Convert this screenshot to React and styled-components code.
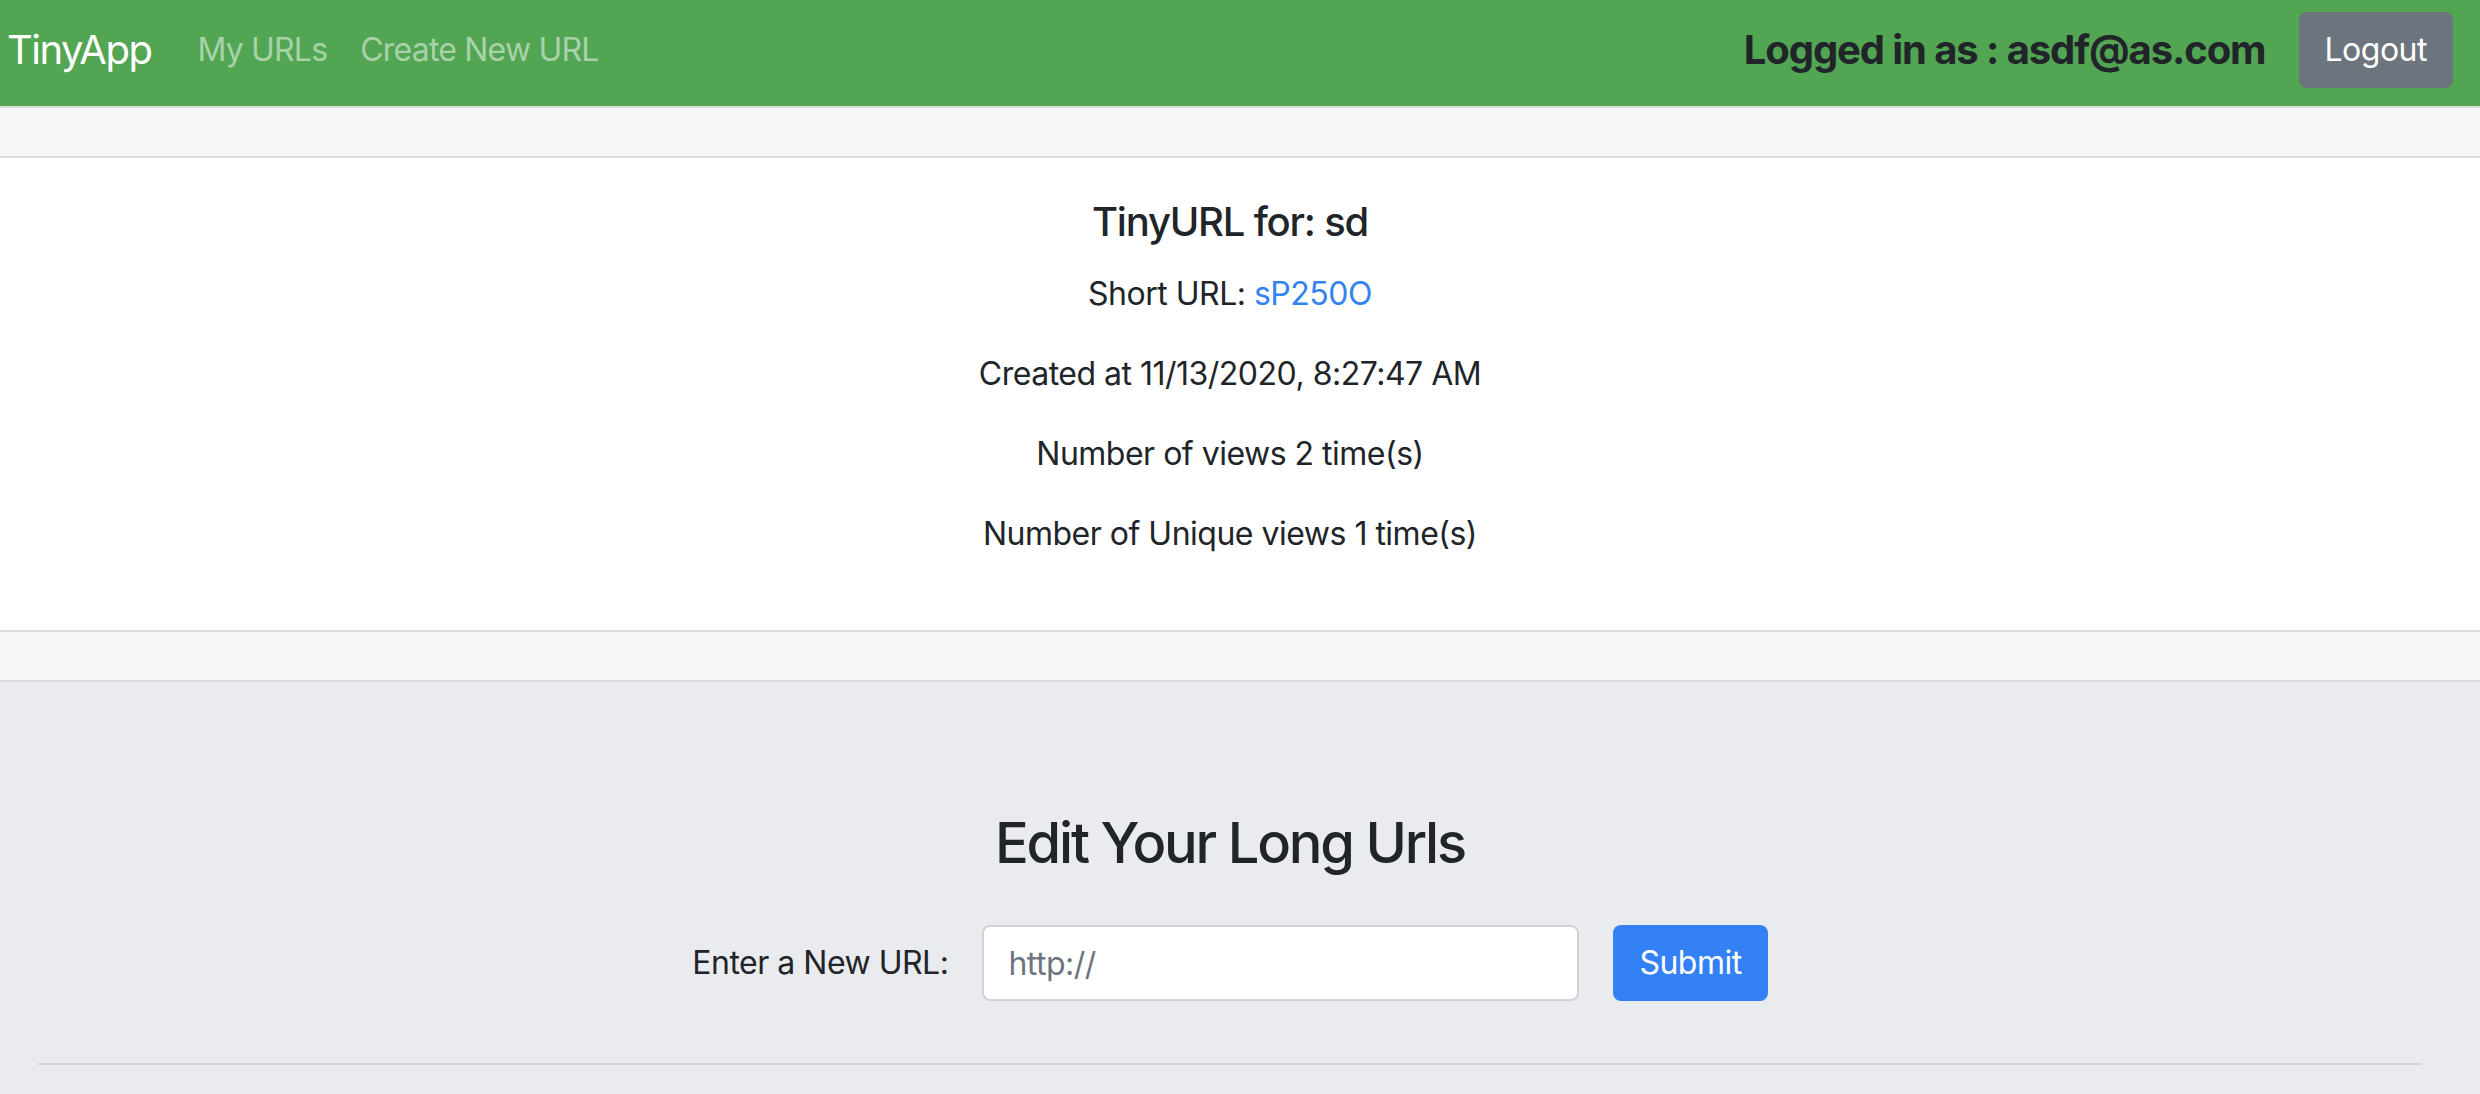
import styled, { createGlobalStyle } from 'styled-components';

const GlobalStyle = createGlobalStyle`
  * {
    box-sizing: border-box;
  }

  body {
    margin: 0;
    background-color: #eaebef;
    font-family: Inter, "Noto Sans", sans-serif;
    color: #212529;
    letter-spacing: -0.5px;
  }
`;

const stats = [
  'Created at 11/13/2020, 8:27:47 AM',
  'Number of views 2 time(s)',
  'Number of Unique views 1 time(s)',
];

function App() {
  return (
    <>
      <GlobalStyle />
      <Navbar>
        <Brand>TinyApp</Brand>
        <NavLinks>
          <NavLink href="#">My URLs</NavLink>
          <NavLink href="#">Create New URL</NavLink>
        </NavLinks>
        <UserArea>
          <LoggedIn>Logged in as : asdf@as.com</LoggedIn>
          <Button variant="secondary">Logout</Button>
        </UserArea>
      </Navbar>
      <Band />
      <Details>
        <Title>TinyURL for: sd</Title>
        <Line>
          Short URL: <ShortLink href="#">sP250O</ShortLink>
        </Line>
        {stats.map((text) => (
          <Line key={text}>{text}</Line>
        ))}
      </Details>
      <Band />
      <EditSection>
        <Heading>Edit Your Long Urls</Heading>
        <Form onSubmit={(e) => e.preventDefault()}>
          <Label htmlFor="longURL">Enter a New URL:</Label>
          <Input id="longURL" type="text" placeholder="http://" />
          <Button variant="primary" type="submit">
            Submit
          </Button>
        </Form>
        <Rule />
      </EditSection>
    </>
  );
}

const Navbar = styled.nav`
  display: flex;
  align-items: center;
  height: 106px;
  padding: 12px 27px 18px 7px;
  background-color: #52a552;
`;

const Brand = styled.a`
  font-size: 40px;
  line-height: 60px;
  letter-spacing: -1.5px;
  color: #fff;
  margin-right: 46px;
  white-space: nowrap;
`;

const NavLinks = styled.div`
  display: flex;
  gap: 33px;
`;

const NavLink = styled.a`
  font-size: 32px;
  line-height: 48px;
  letter-spacing: -0.8px;
  color: rgba(255, 255, 255, 0.5);
  text-decoration: none;
  white-space: nowrap;
`;

const UserArea = styled.div`
  display: flex;
  align-items: center;
  gap: 33px;
  margin-left: auto;
`;

const LoggedIn = styled.h5`
  margin: 0;
  font-size: 40px;
  font-weight: 700;
  line-height: 60px;
  letter-spacing: -1.1px;
  color: #212529;
  white-space: nowrap;
`;

const Button = styled.button`
  height: 76px;
  padding: 0 24px;
  border: 2px solid transparent;
  border-radius: 8px;
  font-family: inherit;
  font-size: 32px;
  line-height: 48px;
  letter-spacing: -0.5px;
  color: #fff;
  background-color: ${(p) => (p.variant === 'primary' ? '#3481f5' : '#6c757d')};
  cursor: pointer;
`;

const Band = styled.div`
  height: 52px;
  background-color: #f6f6f6;
  border-top: 2px solid #dcdcdc;
  border-bottom: 2px solid #dcdcdc;
`;

const Details = styled.section`
  display: flex;
  flex-direction: column;
  align-items: center;
  padding: 40px 20px 40px 0;
  background-color: #fff;
  text-align: center;
`;

const Title = styled.h5`
  margin: 0 0 24px;
  font-size: 40px;
  font-weight: 500;
  line-height: 48px;
  letter-spacing: -1.2px;
`;

const Line = styled.p`
  margin: 0 0 32px;
  font-size: 32px;
  line-height: 48px;
`;

const ShortLink = styled.a`
  color: #3383f2;
  text-decoration: none;
`;

const EditSection = styled.section`
  display: flex;
  flex-direction: column;
  align-items: center;
  padding: 128px 20px 0 0;
`;

const Heading = styled.h3`
  margin: 0 0 48px;
  font-size: 56px;
  font-weight: 500;
  line-height: 1.2;
  letter-spacing: -2.2px;
`;

const Form = styled.form`
  display: flex;
  align-items: center;
  gap: 34px;
`;

const Label = styled.label`
  font-size: 32px;
  line-height: 48px;
`;

const Input = styled.input`
  width: 597px;
  height: 76px;
  padding: 0 24px;
  border: 2px solid #ced4da;
  border-radius: 8px;
  font-family: inherit;
  font-size: 32px;
  letter-spacing: -0.5px;
  color: #495057;
  background-color: #fff;

  &::placeholder {
    color: #6c757d;
  }
`;

const Rule = styled.hr`
  align-self: stretch;
  margin: 62px 38px 0 38px;
  border: 0;
  border-top: 2px solid #d3d4d8;
`;

export default App;
